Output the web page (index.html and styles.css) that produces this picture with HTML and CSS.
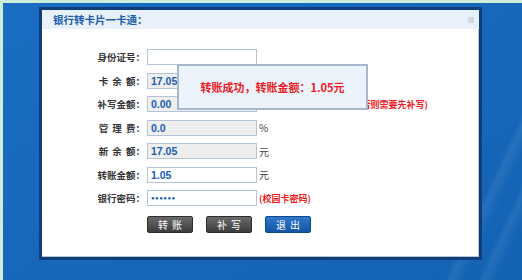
FILE: index.html
```html
<!DOCTYPE html>
<html lang="zh-CN">
<head>
    <meta charset="UTF-8">
    <title>银行转卡片一卡通</title>
    <link rel="stylesheet" href="styles.css">
</head>
<body>
    <div class="desktop">
        <div class="dialog">
            <div class="dialog-head">
                <span class="dialog-title">银行转卡片一卡通：</span>
                <span class="head-icon"></span>
            </div>
            <div class="form">
                <label class="label">身份证号：</label>
                <div class="field"></div>
                <span class="unit"></span>

                <label class="label">卡 余 额：</label>
                <div class="field readonly">17.05</div>
                <span class="unit"></span>

                <label class="label">补写金额：</label>
                <div class="field readonly">0.00</div>
                <span class="note">(卡内有补写金额转账前，否则需要先补写)</span>

                <label class="label">管 理 费：</label>
                <div class="field readonly">0.0</div>
                <span class="unit">%</span>

                <label class="label">新 余 额：</label>
                <div class="field readonly">17.05</div>
                <span class="unit">元</span>

                <label class="label">转账金额：</label>
                <div class="field">1.05</div>
                <span class="unit">元</span>

                <label class="label">银行密码：</label>
                <div class="field dots">●●●●●●</div>
                <span class="note">(校园卡密码)</span>
            </div>
            <div class="buttons">
                <button class="btn dark">转账</button>
                <button class="btn dark">补写</button>
                <button class="btn blue">退出</button>
            </div>
            <div class="popup">转账成功，转账金额：1.05元</div>
        </div>
    </div>
</body>
</html>
```

FILE: styles.css
```css
body {
    margin: 0;
    padding: 0;
    font-family: "Noto Sans CJK SC", "Liberation Sans", sans-serif;
}
.desktop {
    width: 519px;
    height: 277px;
    border-top: 3px solid #cdeed8;
    border-left: 3px solid #cdeed8;
    background-color: #1566b9;
    background-image:
        linear-gradient(115deg, transparent 88%, rgba(255, 255, 255, 0.08) 89%, transparent 91%),
        linear-gradient(115deg, transparent 93%, rgba(255, 255, 255, 0.07) 94%, transparent 96%),
        linear-gradient(to bottom right, #1a6dc2, #1462b4);
    overflow: hidden;
}
.dialog {
    position: relative;
    box-sizing: border-box;
    width: 443px;
    height: 253px;
    margin: 4px 0 0 36px;
    border: 3px solid #0f3f7a;
    background-color: #fff;
    box-shadow: inset -1px -1px 0 #b9c3cf;
}
.dialog-head {
    height: 19px;
    background-color: #e8f1fa;
    display: flex;
    align-items: center;
    justify-content: space-between;
    padding: 0 5px 0 11px;
}
.dialog-title {
    color: #1b5cad;
    font-size: 10.5px;
    font-weight: bold;
}
.head-icon {
    width: 6px;
    height: 6px;
    background-color: #cfd7df;
}
.form {
    display: grid;
    grid-template-columns: 103px 110px 1fr;
    grid-auto-rows: 16px;
    column-gap: 2px;
    row-gap: 7.5px;
    padding-top: 20px;
    align-items: center;
}
.label {
    text-align: right;
    font-size: 9.5px;
    font-weight: bold;
    color: #333;
    white-space: pre;
    word-spacing: 2px;
}
.field {
    box-sizing: border-box;
    height: 16px;
    border: 1px solid #b4c4d8;
    background-color: #fff;
    padding: 0 3px;
    font-family: "Liberation Sans", Arial, sans-serif;
    font-size: 10.5px;
    font-weight: bold;
    line-height: 14px;
    color: #1a5cb2;
}
.field.readonly {
    background-color: #eeeeee;
}
.field.dots {
    font-size: 6px;
    letter-spacing: 0.5px;
}
.unit {
    font-size: 10px;
    color: #444;
}
.note {
    font-size: 9px;
    font-weight: bold;
    color: #f01820;
    white-space: nowrap;
}
.buttons {
    display: flex;
    gap: 13px;
    margin: 10px 0 0 105px;
}
.btn {
    width: 46px;
    height: 17px;
    padding: 0;
    border-radius: 2px;
    font-family: "Noto Sans CJK SC", sans-serif;
    font-size: 10px;
    letter-spacing: 4px;
    text-indent: 4px;
    color: #fff;
    line-height: 15px;
}
.btn.dark {
    border: 1px solid #2e2e2e;
    background: linear-gradient(to bottom, #6a6a6a, #3d3d3d);
}
.btn.blue {
    border: 1px solid #0f4a90;
    background: linear-gradient(to bottom, #3079c8, #1455a4);
}
.popup {
    position: absolute;
    left: 135px;
    top: 54px;
    box-sizing: border-box;
    width: 191px;
    height: 46px;
    border: 2px solid #a8b8cc;
    background-color: #ecf3fb;
    display: flex;
    align-items: center;
    justify-content: center;
    font-size: 11px;
    font-weight: bold;
    color: #ec1b24;
}
```
